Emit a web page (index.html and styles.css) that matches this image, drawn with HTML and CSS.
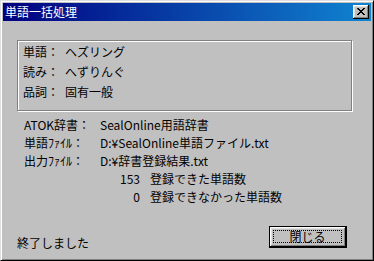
FILE: index.html
```html
<!DOCTYPE html>
<html lang="ja">
<head>
    <meta charset="UTF-8" />
    <title>単語一括処理</title>
    <link rel="stylesheet" href="styles.css">
</head>
<body>
    <div class="window">
        <div class="titlebar">
            <span class="title">単語一括処理</span>
            <button class="close" aria-label="閉じる">
                <svg width="8" height="7" viewBox="0 0 8 7">
                    <path d="M0 0h2v1h1v1h2v-1h1v-1h2v1h-1v1h-1v1h-1v1h1v1h1v1h1v1h-2v-1h-1v-1h-2v1h-1v1h-2v-1h1v-1h1v-1h1v-1h-1v-1h-1z" fill="#000"/>
                </svg>
            </button>
        </div>
        <div class="content">
            <div class="group">
                <div class="row"><span class="label">単語：</span><span>ヘズリング</span></div>
                <div class="row"><span class="label">読み：</span><span>へずりんぐ</span></div>
                <div class="row"><span class="label">品詞：</span><span>固有一般</span></div>
            </div>
            <div class="info">
                <div class="line"><span class="key">ATOK辞書：</span><span>SealOnline用語辞書</span></div>
                <div class="line"><span class="key">単語ﾌｧｲﾙ：</span><span>D:¥SealOnline単語ファイル.txt</span></div>
                <div class="line"><span class="key">出力ﾌｧｲﾙ：</span><span>D:¥辞書登録結果.txt</span></div>
                <div class="line"><span class="num">153</span><span>登録できた単語数</span></div>
                <div class="line"><span class="num">0</span><span>登録できなかった単語数</span></div>
            </div>
            <div class="footer">
                <span class="status">終了しました</span>
                <button class="default-btn"><span class="focus">閉じる</span></button>
            </div>
        </div>
    </div>
</body>
</html>
```

FILE: styles.css
```css
body {
    margin: 0;
    background-color: #c0c0c0;
    font-family: "Noto Sans CJK JP", "Liberation Sans", sans-serif;
    font-size: 12px;
    color: #000000;
}
.window {
    width: 374px;
    height: 261px;
    box-sizing: border-box;
    border-top: 1px solid #dfdfdf;
    border-left: 1px solid #dfdfdf;
    border-right: 1px solid #000000;
    border-bottom: 1px solid #000000;
    box-shadow: inset 1px 1px 0 #ffffff, inset -1px -1px 0 #808080;
    padding: 2px;
    background-color: #c0c0c0;
}
.titlebar {
    height: 18px;
    display: flex;
    justify-content: space-between;
    align-items: flex-start;
    background: linear-gradient(to right, #000080, #1084d0);
}
.title {
    color: #ffffff;
    line-height: 18px;
    padding-left: 2px;
}
.close {
    width: 16px;
    height: 14px;
    margin: 2px 2px 0 0;
    padding: 0;
    border: none;
    background-color: #c0c0c0;
    box-shadow: inset -1px -1px 0 #000000, inset 1px 1px 0 #ffffff, inset -2px -2px 0 #808080, inset 2px 2px 0 #dfdfdf;
    display: flex;
    align-items: center;
    justify-content: center;
}
.close svg {
    display: block;
    margin: 0 1px 1px 0;
}
.group {
    width: 335px;
    height: 71px;
    box-sizing: border-box;
    margin: 19px 0 0 14px;
    padding: 1px 0 0 5px;
    border: 1px solid #808080;
    box-shadow: inset 1px 1px 0 #ffffff, 1px 1px 0 #ffffff;
}
.row {
    display: flex;
    line-height: 20px;
    height: 20px;
}
.label {
    width: 42px;
    flex-shrink: 0;
}
.info {
    margin-top: 5px;
    padding-left: 21px;
}
.line {
    display: flex;
    line-height: 18px;
    height: 18px;
    white-space: nowrap;
}
.key {
    width: 76px;
    flex-shrink: 0;
}
.num {
    width: 116px;
    flex-shrink: 0;
    text-align: right;
    margin-right: 10px;
}
.footer {
    display: flex;
    justify-content: space-between;
    align-items: flex-start;
    margin-top: 20px;
    padding: 0 24px 0 14px;
}
.status {
    margin-top: 10px;
    line-height: 14px;
}
.default-btn {
    width: 78px;
    height: 22px;
    box-sizing: border-box;
    padding: 2px;
    border: 1px solid #000000;
    background-color: #c0c0c0;
    box-shadow: inset -1px -1px 0 #000000, inset 1px 1px 0 #ffffff, inset -2px -2px 0 #808080, inset 2px 2px 0 #dfdfdf;
    font-family: inherit;
    font-size: 12px;
    color: #000000;
    display: flex;
}
.focus {
    flex: 1;
    margin: 1px 2px 2px 1px;
    border: 1px dotted #000000;
    line-height: 12px;
    text-align: center;
}
```
